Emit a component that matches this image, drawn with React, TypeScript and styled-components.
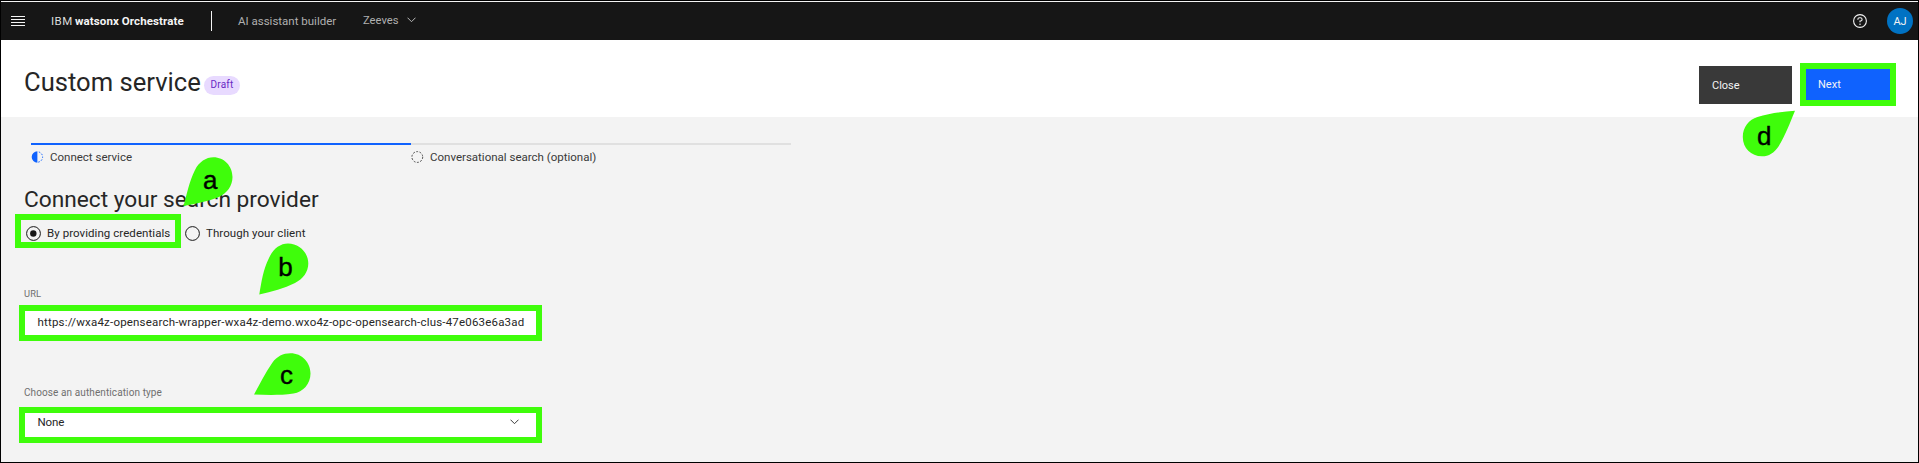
import React from 'react';
import styled, { createGlobalStyle } from 'styled-components';

const GREEN = '#3ffd0b';
const BLUE = '#0f62fe';

const GlobalStyle = createGlobalStyle`
  *, *::before, *::after { box-sizing: border-box; }
  html, body { margin: 0; background: #f3f3f3; }
  body {
    font-family: Roboto, "Noto Sans", sans-serif;
    font-size: 11.5px;
    color: #262626;
    overflow: hidden;
  }
  svg { display: block; flex: none; }
`;

const Page = styled.div`
  position: relative;
  height: 463px;
  border: 1px solid #000;
  background: #f3f3f3;
  white-space: nowrap;
  overflow: hidden;
`;

const Header = styled.header`
  display: flex;
  align-items: center;
  height: 39px;
  padding: 0 5px 0 10px;
  border-top: 1px solid #f4f4f4;
  background: #161616;
  color: #f4f4f4;
`;

const Brand = styled.div`
  display: flex;
  width: 160px;
  margin-left: 26px;
  letter-spacing: 0.1px;
`;

const BrandPrefix = styled.span`
  width: 24px;
  color: #dcdcdc;
  letter-spacing: 0.45px;
`;

const BrandName = styled.strong`
  font-weight: 700;
`;

const HeaderDivider = styled.span`
  width: 1px;
  height: 20px;
  background: #f4f4f4;
`;

const Product = styled.span`
  width: 98px;
  margin-left: 26px;
  color: #b0b0b0;
`;

const AssistantPicker = styled.button`
  display: flex;
  align-items: center;
  gap: 9px;
  margin: 0 auto 2px 27px;
  padding: 0;
  border: 0;
  background: none;
  font: inherit;
  font-size: 11.2px;
  color: #b0b0b0;
`;

const Avatar = styled.span`
  display: grid;
  place-items: center;
  width: 26px;
  height: 26px;
  margin-left: 20px;
  border-radius: 50%;
  background: #0072c3;
  font-size: 11px;
`;

const TitleBar = styled.section`
  display: flex;
  align-items: flex-start;
  height: 77px;
  padding: 23px 22px 0 23px;
  background: #fff;
`;

const Title = styled.h1`
  width: 180px;
  margin: 0;
  padding-top: 4px;
  font-size: 25.6px;
  font-weight: 400;
  line-height: 30px;
`;

const Tag = styled.span`
  height: 19px;
  width: 36px;
  margin: 13px auto 0 0;
  border-radius: 10px;
  background: #e8daff;
  color: #6929c4;
  font-size: 10px;
  letter-spacing: 0.2px;
  line-height: 18px;
  text-align: center;
`;

const ActionButton = styled.button<{ $primary?: boolean }>`
  width: ${p => (p.$primary ? 96 : 93)}px;
  height: ${p => (p.$primary ? 43 : 38)}px;
  margin: ${p => (p.$primary ? '0 0 0 8px' : '3px 0 0')};
  padding: 0 0 0 ${p => (p.$primary ? 12 : 13)}px;
  border: ${p => (p.$primary ? `6px solid ${GREEN}` : 0)};
  background: ${p => (p.$primary ? BLUE : '#393939')};
  color: #f4f4f4;
  font: inherit;
  font-size: 11px;
  text-align: left;
`;

const Content = styled.main`
  padding-top: 26px;
`;

const Steps = styled.ol`
  display: flex;
  margin: 0 0 0 30px;
  padding: 0;
  list-style: none;
`;

const Step = styled.li<{ $active?: boolean }>`
  display: flex;
  align-items: center;
  gap: 6px;
  width: 380px;
  height: 23px;
  padding-top: 2px;
  border-top: 2px solid ${p => (p.$active ? BLUE : '#e0e0e0')};
  color: #393939;
`;

const SectionTitle = styled.h2`
  margin: 20px 0 0 23px;
  font-size: 22.7px;
  font-weight: 400;
  line-height: 28px;
`;

const RadioGroup = styled.div`
  display: flex;
  margin-left: 14px;
`;

const RadioOption = styled.label<{ $highlighted?: boolean }>`
  display: flex;
  align-items: center;
  gap: 6px;
  width: 166px;
  height: 34px;
  padding-top: 5px;
  padding-left: ${p => (p.$highlighted ? 5 : 4)}px;
  border: ${p => (p.$highlighted ? `6px solid ${GREEN}` : 0)};
  letter-spacing: 0.06px;

  & > span { padding-bottom: 1px; }
`;

const FieldLabel = styled.label<{ $top: number; $gap: number; $size: number }>`
  display: block;
  margin: ${p => p.$top}px 0 ${p => p.$gap}px 23px;
  color: #6f6f6f;
  font-size: ${p => p.$size}px;
  letter-spacing: 0.1px;
  line-height: 12px;
`;

const Field = styled.div<{ $raised?: boolean }>`
  display: flex;
  align-items: center;
  justify-content: space-between;
  width: 523px;
  height: 36px;
  margin-left: 18px;
  padding: 0 17px ${p => (p.$raised ? 6 : 3)}px 12.5px;
  border: 6px solid ${GREEN};
  background: #fff;
`;

const FieldValue = styled.span<{ $spacing: number }>`
  letter-spacing: ${p => p.$spacing}px;
`;

const Pin = styled.svg<{ $x: number; $y: number }>`
  position: absolute;
  left: ${p => p.$x}px;
  top: ${p => p.$y}px;
  overflow: visible;

  path { fill: ${GREEN}; }
  text {
    font: 26px "Liberation Sans", sans-serif;
    fill: #000;
    stroke: #000;
    stroke-width: 0.4px;
  }
`;

interface Callout {
  letter: string;
  x: number;
  y: number;
  tx: number;
  ty: number;
  shape: string;
}

const callouts: Callout[] = [
  {
    letter: 'a', x: 182, y: 156, tx: 20, ty: 32,
    shape: 'M.5 49C4 37 6 25 12 13C16 5 23 .3 30.5 .3C41 .3 49.5 9 49.5 20C49.5 29 44 36 36 40C25 44.5 13 46.5 .5 49Z',
  },
  {
    letter: 'b', x: 258, y: 242, tx: 19.3, ty: 33.3,
    shape: 'M.3 51.5C2.5 39 4 27 10 15C14 6 21 .5 29 .5C40 .5 49.3 9.5 49.3 20.5C49.3 29 44 36 36 40C25 45.5 13 48.5 .3 51.5Z',
  },
  {
    letter: 'c', x: 253, y: 352, tx: 26, ty: 31.3,
    shape: 'M0 41.5C6 31 11 20 18.5 9.5C23 3.5 29 .3 36.5 .3C48 .3 56.5 9.5 56.5 20.5C56.5 31 49 39 39.5 40.5C26 42.5 13 42 0 41.5Z',
  },
  {
    letter: 'd', x: 1741, y: 109, tx: 15, ty: 35.3,
    shape: 'M53 .8C48 13 43 26 36.5 36.5C32 43 27 46.3 20 46.3C9 46.3 .8 38 .8 27C.8 17 7 9.5 15.5 7C27 3.5 40 1.8 53 .8Z',
  },
];

const Chevron = ({ color }: { color: string }) => (
  <svg width="9" height="6" viewBox="0 0 9 6" fill="none" stroke={color} strokeWidth="1">
    <path d="M.5 .7L4.5 4.7L8.5 .7" />
  </svg>
);

const MenuIcon = () => (
  <svg width="14" height="10" viewBox="0 0 14 10" stroke="#f4f4f4" strokeWidth="1">
    <path d="M0 .5H14M0 3.500H14M0 6.500H14M0 9.500H14" />
  </svg>
);

const HelpIcon = () => (
  <svg width="14" height="14" viewBox="0 0 14 14" fill="none" stroke="#f4f4f4" strokeWidth="1.1">
    <circle cx="7" cy="7" r="6.4" />
    <path d="M4.9 5.7V5.3C4.9 4.4 5.6 3.8 6.5 3.8H7.4C8.4 3.8 9.1 4.5 9.1 5.4S8.4 7 7.4 7H7V8.3" />
    <circle cx="7" cy="10.2" r=".75" fill="#f4f4f4" stroke="none" />
  </svg>
);

const CurrentStepIcon = () => (
  <svg width="13" height="12" viewBox="0 0 13 12">
    <path d="M6.4 .3A5.7 5.7 0 0 0 6.4 11.7Z" fill={BLUE} />
    <path d="M6.4 .8A5.2 5.2 0 0 1 6.4 11.2" fill="none" stroke={BLUE} strokeWidth="1" strokeDasharray="1.5 1.5" strokeDashoffset="-1.5" />
  </svg>
);

const PendingStepIcon = () => (
  <svg width="13" height="12" viewBox="0 0 13 12" fill="none" stroke="#393939">
    <circle cx="6.3" cy="6" r="5.4" strokeWidth=".9" strokeDasharray="1.9 1.49" />
  </svg>
);

const RadioIcon = ({ checked }: { checked?: boolean }) => (
  <svg width="15" height="15" viewBox="0 0 15 15" fill="none">
    <circle cx="7.5" cy="7.5" r="6.9" stroke="#161616" strokeWidth="1" />
    {checked && <circle cx="7.3" cy="7.5" r="3.2" fill="#161616" />}
  </svg>
);

export default function App() {
  return (
    <>
      <GlobalStyle />
      <Page>
        <Header>
          <MenuIcon />
          <Brand>
            <BrandPrefix>IBM</BrandPrefix>
            <BrandName>watsonx Orchestrate</BrandName>
          </Brand>
          <HeaderDivider />
          <Product>AI assistant builder</Product>
          <AssistantPicker>
            Zeeves
            <Chevron color="#b9b9b9" />
          </AssistantPicker>
          <HelpIcon />
          <Avatar>AJ</Avatar>
        </Header>

        <TitleBar>
          <Title>Custom service</Title>
          <Tag>Draft</Tag>
          <ActionButton>Close</ActionButton>
          <ActionButton $primary>Next</ActionButton>
        </TitleBar>

        <Content>
          <Steps>
            <Step $active>
              <CurrentStepIcon />
              Connect service
            </Step>
            <Step>
              <PendingStepIcon />
              Conversational search (optional)
            </Step>
          </Steps>

          <SectionTitle>Connect your search provider</SectionTitle>
          <RadioGroup>
            <RadioOption $highlighted>
              <RadioIcon checked />
              <span>By providing credentials</span>
            </RadioOption>
            <RadioOption>
              <RadioIcon />
              <span>Through your client</span>
            </RadioOption>
          </RadioGroup>

          <FieldLabel $top={40} $gap={5} $size={9.3}>URL</FieldLabel>
          <Field>
            <FieldValue $spacing={0.19}>
              https://wxa4z-opensearch-wrapper-wxa4z-demo.wxo4z-opc-opensearch-clus-47e063e6a3ad
            </FieldValue>
          </Field>

          <FieldLabel $top={46} $gap={8} $size={10}>Choose an authentication type</FieldLabel>
          <Field $raised>
            <FieldValue $spacing={-0.1}>None</FieldValue>
            <Chevron color="#393939" />
          </Field>
        </Content>

        {callouts.map(c => (
          <Pin key={c.letter} $x={c.x} $y={c.y} width="58" height="53" aria-label={c.letter}>
            <path d={c.shape} />
            <text x={c.tx} y={c.ty}>{c.letter}</text>
          </Pin>
        ))}
      </Page>
    </>
  );
}
